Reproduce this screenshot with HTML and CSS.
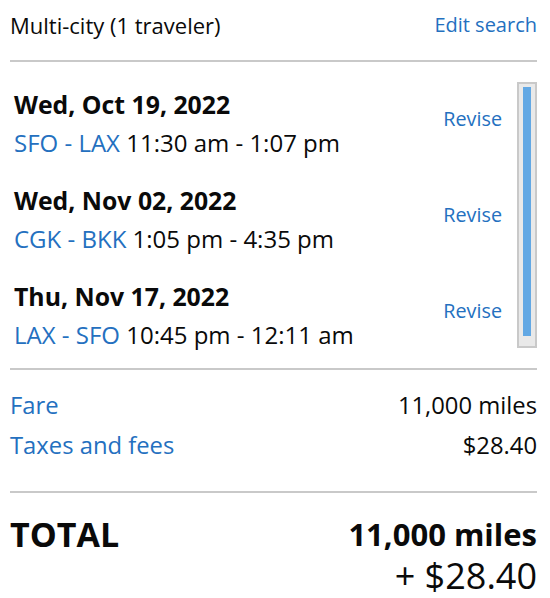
FILE: index.html
```html
<!DOCTYPE html>
<html>
<head>
<meta charset="utf-8">
<link rel="stylesheet" href="styles.css">
</head>
<body>
<div class="page">
  <div class="header">
    <span class="title">Multi-city (1 traveler)</span>
    <a class="link edit">Edit search</a>
  </div>
  <div class="divider"></div>
  <div class="segments-wrap">
    <div class="segments">
      <div class="segment">
        <div class="seg-info">
          <div class="date">Wed, Oct 19, 2022</div>
          <div class="route"><span class="link">SFO - LAX</span> 11:30 am - 1:07 pm</div>
        </div>
        <a class="link revise">Revise</a>
      </div>
      <div class="segment">
        <div class="seg-info">
          <div class="date">Wed, Nov 02, 2022</div>
          <div class="route"><span class="link">CGK - BKK</span> 1:05 pm - 4:35 pm</div>
        </div>
        <a class="link revise">Revise</a>
      </div>
      <div class="segment">
        <div class="seg-info">
          <div class="date">Thu, Nov 17, 2022</div>
          <div class="route"><span class="link">LAX - SFO</span> 10:45 pm - 12:11 am</div>
        </div>
        <a class="link revise">Revise</a>
      </div>
    </div>
    <div class="scrollbar"><div class="thumb"></div></div>
  </div>
  <div class="divider mid"></div>
  <div class="prices">
    <div class="price-row"><span class="link">Fare</span><span>11,000 miles</span></div>
    <div class="price-row"><span class="link">Taxes and fees</span><span>$28.40</span></div>
  </div>
  <div class="divider low"></div>
  <div class="total">
    <div class="total-label">TOTAL</div>
    <div class="total-value">
      <div class="miles">11,000 miles</div>
      <div class="cash">+ $28.40</div>
    </div>
  </div>
</div>
</body>
</html>
```
FILE: styles.css
```css
* { box-sizing: border-box; }
html, body { margin: 0; padding: 0; background: #fff; }
body { font-family: "Open Sans", "Noto Sans", sans-serif; color: #0a0a0a; overflow: hidden; }
.page { padding: 0 13px 0 10px; }
.link { color: #2470bf; text-decoration: none; }
.header {
  display: flex; justify-content: space-between; align-items: flex-start;
  padding-top: 12px; height: 60px;
  font-size: 20px; line-height: 26px;
}
.title { font-size: 22px; }
.divider { height: 2px; background: #c9c9c9; }
.segments-wrap { display: flex; padding-top: 20px; }
.segments { flex: 1; padding: 4px 15px 0 4px; }
.segment { display: flex; justify-content: space-between; align-items: flex-start; }
.segment + .segment { margin-top: 18px; }
.date { font-size: 24.8px; font-weight: 700; line-height: 36px; }
.route { font-size: 24px; line-height: 42px; }
.revise { font-size: 19.8px; line-height: 26px; margin-top: 20px; }
.scrollbar {
  width: 20px; height: 266px; border: 2px solid #c9c9c9; background: #e9e9e9;
  padding: 3px 4px;
}
.thumb { width: 8px; height: 249px; background: #62a8e4; }
.divider.mid { margin-top: 12px; }
.prices { padding-top: 15px; }
.price-row { display: flex; justify-content: space-between; font-size: 23.8px; line-height: 40px; }
.divider.low { margin-top: 26px; }
.total { display: flex; justify-content: space-between; padding-top: 19px; }
.total-label { font-size: 34px; font-weight: 700; line-height: 44px; }
.total-value { text-align: right; }
.miles { font-size: 31px; font-weight: 700; line-height: 44px; }
.cash { font-size: 36px; line-height: 40px; }
```
